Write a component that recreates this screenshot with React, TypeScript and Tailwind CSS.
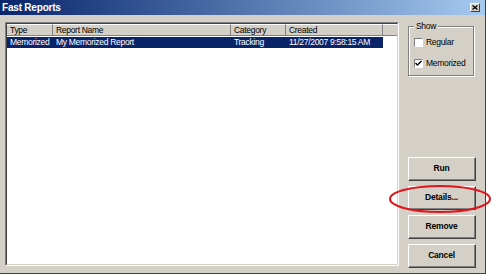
import React from "react";

const cols = [
  { label: "Type", w: "w-[46px]" },
  { label: "Report Name", w: "w-[178px]" },
  { label: "Category", w: "w-[55px]" },
  { label: "Created", w: "w-[97px]" },
];

function Btn({ label }: { label: string }) {
  return (
    <div className="w-[68px] h-[24px] border border-t-white border-l-white border-r-[#404040] border-b-[#404040]">
      <div className="w-full h-full flex items-center justify-center border-r border-b border-[#808080] font-bold text-[8.5px] tracking-[-0.2px] text-black">
        {label}
      </div>
    </div>
  );
}

function Check({ label, checked }: { label: string; checked?: boolean }) {
  return (
    <div className="flex items-center gap-[3px] h-[9px]">
      <div className="w-[9px] h-[9px] bg-white border border-t-[#808080] border-l-[#808080] border-r-white border-b-white flex items-center justify-center">
        {checked && (
          <svg width="7" height="7" viewBox="0 0 7 7">
            <path d="M0.5 3 L2.5 5 L6.5 1" stroke="black" strokeWidth="1.4" fill="none" />
          </svg>
        )}
      </div>
      <span className="text-[8.5px] tracking-[-0.3px] text-black">{label}</span>
    </div>
  );
}

export default function App() {
  return (
    <div className="w-[492px] h-[277px] bg-white relative" style={{ fontFamily: "Tahoma, 'Liberation Sans', sans-serif" }}>
      <div className="w-[486px] h-[274px] bg-[#d4d0c8] border-r border-b border-[#404040] flex flex-col">
        {/* Title bar */}
        <div className="h-[16px] flex items-center justify-between pl-[2px] pr-[5px] bg-gradient-to-r from-[#0a246a] to-[#a6caf0]">
          <span className="text-white font-bold text-[10px] tracking-[-0.2px]">Fast Reports</span>
          <div className="w-[10px] h-[9px] bg-[#d4d0c8] border border-t-white border-l-white border-r-[#404040] border-b-[#404040] flex items-center justify-center">
            <svg width="6" height="5" viewBox="0 0 6 5">
              <path d="M0.5 0.5 L5.5 4.5 M5.5 0.5 L0.5 4.5" stroke="black" strokeWidth="1.3" />
            </svg>
          </div>
        </div>

        <div className="flex flex-1 pt-[7px] pl-[5px] pb-[8px]">
          {/* List view */}
          <div className="w-[394px] h-[244px] border border-t-[#808080] border-l-[#808080] border-r-white border-b-white">
            <div className="w-full h-full bg-white border border-t-[#404040] border-l-[#404040] border-r-[#d4d0c8] border-b-[#d4d0c8]">
              <div className="flex h-[12px] bg-[#d4d0c8]">
                {cols.map((c) => (
                  <div
                    key={c.label}
                    className={`${c.w} h-full text-[8.5px] tracking-[-0.3px] leading-[11px] pl-[3px] text-black border-r border-b border-r-[#808080] border-b-[#808080] border-t border-t-white`}
                  >
                    {c.label}
                  </div>
                ))}
                <div className="flex-1 h-full border-b border-b-[#808080] border-t border-t-white" />
              </div>
              <div className="flex h-[11px] mt-[1px] w-[376px] bg-[#0a246a] text-white text-[8.5px] tracking-[-0.3px] leading-[11px]">
                <div className="w-[46px] pl-[3px]">Memorized</div>
                <div className="w-[178px] pl-[3px]">My Memorized Report</div>
                <div className="w-[55px] pl-[3px]">Tracking</div>
                <div className="w-[97px] pl-[3px]">11/27/2007 9:58:15 AM</div>
              </div>
            </div>
          </div>

          {/* Right panel */}
          <div className="flex flex-col pl-[9px]">
            <div className="relative w-[66px] h-[50px] mt-[4px] border border-[#808080] shadow-[inset_1px_1px_0_white,1px_1px_0_white] flex flex-col gap-[12px] pl-[5px] pt-[11px]">
              <span className="absolute -top-[7px] left-[5px] px-[2px] bg-[#d4d0c8] text-[8.5px] tracking-[-0.3px] text-black">Show</span>
              <Check label="Regular" />
              <Check label="Memorized" checked />
            </div>
            <div className="flex flex-col gap-[5px] mt-[81px]">
              <Btn label="Run" />
              <Btn label="Details..." />
              <Btn label="Remove" />
              <Btn label="Cancel" />
            </div>
          </div>
        </div>
      </div>

      {/* Red annotation ellipse */}
      <svg className="absolute left-[388px] top-[184px]" width="104" height="30" viewBox="0 0 104 30">
        <ellipse cx="52" cy="15" rx="50" ry="13" fill="none" stroke="#e0161c" strokeWidth="2" />
      </svg>
    </div>
  );
}
